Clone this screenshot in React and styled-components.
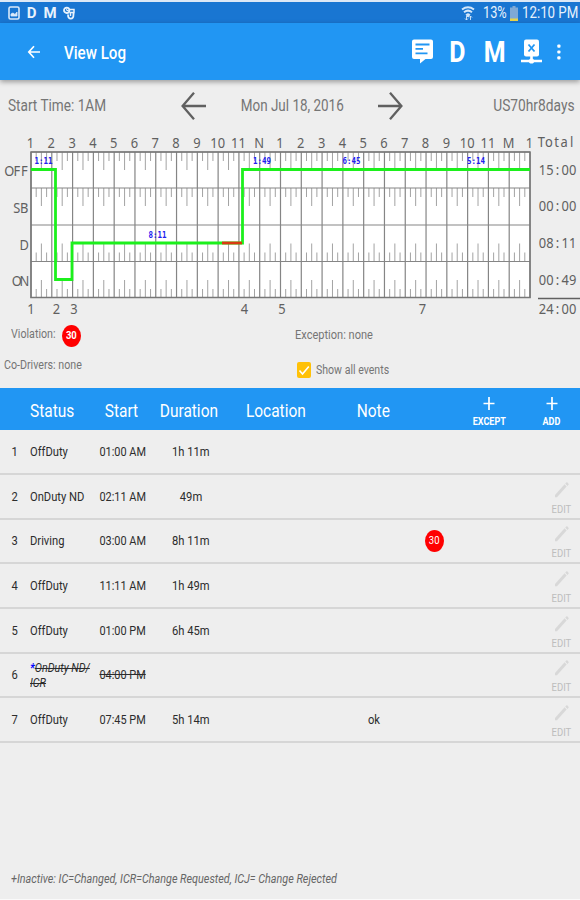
import React from "react";
import styled, { createGlobalStyle, css } from "styled-components";

const GlobalStyle = createGlobalStyle`
  body {
    margin: 0;
    background: #eeeeee;
  }
  * {
    box-sizing: border-box;
  }
`;

const HOURS = [
  "1", "2", "3", "4", "5", "6", "7", "8", "9", "10", "11", "N",
  "1", "2", "3", "4", "5", "6", "7", "8", "9", "10", "11", "M", "1"
];

const DUTY_ROWS = [
  { label: "OFF", total: "15:00", top: 22 },
  { label: "SB", total: "00:00", top: 58 },
  { label: "D", total: "08:11", top: 95, fromBottom: true },
  { label: "ON", total: "00:49", top: 131.5, fromBottom: true }
];

const MARKERS = [
  { label: "1", x: 31 },
  { label: "2", x: 56.5 },
  { label: "3", x: 74 },
  { label: "4", x: 244.5 },
  { label: "5", x: 282 },
  { label: "7", x: 422.5 }
];

const SPANS = [
  { label: "1:11", x: 43.5, y: 34 },
  { label: "8:11", x: 157.5, y: 108 },
  { label: "1:49", x: 262, y: 34 },
  { label: "6:45", x: 351.5, y: 34 },
  { label: "5:14", x: 476, y: 34 }
];

const EVENTS = [
  { status: "OffDuty", start: "01:00 AM", duration: "1h 11m", locked: true },
  { status: "OnDuty ND", start: "02:11 AM", duration: "49m" },
  { status: "Driving", start: "03:00 AM", duration: "8h 11m", flag: "30" },
  { status: "OffDuty", start: "11:11 AM", duration: "1h 49m" },
  { status: "OffDuty", start: "01:00 PM", duration: "6h 45m" },
  { status: "OnDuty ND/", suffix: "ICR", start: "04:00 PM", inactive: true },
  { status: "OffDuty", start: "07:45 PM", duration: "5h 14m", note: "ok" }
];

const LEFT = 31;
const RIGHT = 530;
const BOTTOM = 168;
const HOUR = (RIGHT - LEFT) / 24;

const Screen = styled.div`
  display: flex;
  flex-direction: column;
  width: 580px;
  height: 900px;
  overflow: hidden;
  border-top: 2px solid #dce8f6;
  border-bottom: 1px solid #fafafa;
  background: #eeeeee;
  font-family: Roboto, "Liberation Sans", sans-serif;
`;

// condensed text, squeezed from the side it is aligned to
const Text = styled.span`
  display: inline-block;
  white-space: nowrap;
  transform: scaleX(${p => p.$squeeze || 0.86});
  transform-origin: ${p => p.$from || "left"} center;
`;

const StatusBar = styled.div`
  flex: none;
  display: flex;
  align-items: center;
  height: 21px;
  padding: 1px 3px 0 8px;
  background: #1976d2;
  color: #e8f2fc;
  font-size: 16px;

  svg {
    flex: none;
    display: block;
  }
`;

const StatusLetter = styled.b`
  width: ${p => p.$width}px;
  margin-right: ${p => p.$gap || 0}px;
  font-size: 15px;
  text-align: center;
  line-height: 20px;
`;

const StatusRight = styled.div`
  display: flex;
  align-items: center;
  margin-left: auto;
`;

const Charge = styled.div`
  width: 32px;
  margin-right: 3px;
  line-height: 20px;
  text-align: right;
`;

const Clock = styled.div`
  width: 55px;
  margin-left: 4px;
  line-height: 20px;
`;

const AppBar = styled.header`
  flex: none;
  display: flex;
  align-items: center;
  height: 57px;
  padding: 0 19px 0 25px;
  background: #2196f3;
  color: #ffffff;
  box-shadow: 0 2px 5px rgba(0, 0, 0, 0.35);

  svg {
    display: block;
  }
`;

const Title = styled.h1`
  flex: 1;
  margin: 2px 0 0 21px;
  font-size: 18px;
  font-weight: 500;
`;

const Letters = styled.div`
  display: flex;
  margin: 0 8px 0 6px;
`;

const ActionLetter = styled.b`
  width: 37px;
  padding-top: 1px;
  text-align: center;
  font-size: 29px;
  line-height: 34px;
`;

const Overflow = styled.div`
  margin-left: 15px;
`;

const DateRow = styled.div`
  flex: none;
  display: grid;
  grid-template-columns: 172px 28px 168px 28px 1fr;
  align-items: center;
  height: 50px;
  padding: 1px 5px 0 8px;
  color: #757575;
  font-size: 16px;

  > :nth-child(3) {
    text-align: center;
  }
  > :last-child {
    text-align: right;
  }
  svg {
    display: block;
  }
`;

const Chart = styled.svg`
  flex: none;
  display: block;
  width: 580px;
  height: 190px;
`;

const ChartLabel = styled.text`
  fill: #606060;
  font-family: "Noto Sans", sans-serif;
  font-size: 15px;
  text-anchor: middle;
`;

const SpanLabel = styled.text`
  fill: #2020f0;
  font-family: "DejaVu Sans Mono", monospace;
  font-size: 8.5px;
  font-weight: bold;
  text-anchor: middle;
`;

const Details = styled.div`
  flex: none;
  display: grid;
  grid-template-columns: 295px 1fr;
  grid-template-rows: 31px 37px;
  height: 68px;
  color: #757575;
  font-size: 12px;
`;

const Detail = styled.div`
  display: flex;
  align-items: center;
  padding-left: ${p => p.$indent || 0}px;
  padding-bottom: ${p => p.$raise || 0}px;
`;

const ViolationName = styled.div`
  width: 51px;
  padding-bottom: 3px;
`;

const Badge = styled.div`
  display: flex;
  align-items: center;
  justify-content: center;
  width: 19px;
  height: 22px;
  border-radius: 50%;
  background: #ff0000;
  color: #ffffff;
  font-size: 11px;
  font-weight: ${p => (p.$bold ? 700 : 400)};
`;

const CheckBox = styled.div`
  display: flex;
  width: 14px;
  height: 16px;
  margin: 0 5px 0 2px;
  border-radius: 2px;
  background: #ffc107;
`;

const columns = css`
  display: grid;
  grid-template-columns: 30px 70px 55px 72px 97px 100px 20px 1fr;
  align-items: center;
`;

const TableHead = styled.div`
  ${columns}
  flex: none;
  height: 42px;
  padding-top: 2px;
  background: #2196f3;
  color: #ffffff;
  font-size: 18px;
`;

const Row = styled.div`
  ${columns}
  flex: none;
  height: ${p => (p.$first ? 45 : 44.67)}px;
  border-bottom: 2px solid #d6d6d6;
  color: #2c2c2c;
  font-size: 13px;
`;

const Cell = styled.div`
  display: flex;
  justify-content: ${p => (p.$left ? "flex-start" : "center")};
  padding-right: ${p => p.$right || 0}px;
`;

const Inactive = styled.div`
  font-size: 12.5px;
  font-style: italic;
  line-height: 15px;

  s {
    text-decoration-thickness: 1px;
  }
  b {
    color: #0000ff;
  }
`;

const Actions = styled.div`
  display: flex;
  justify-content: flex-end;
  padding-right: ${p => p.$right}px;
`;

const Action = styled.div`
  display: flex;
  flex-direction: column;
  align-items: center;
  width: ${p => p.$width}px;
  padding-top: 5px;
  font-size: 10.5px;
  font-weight: 700;
  line-height: 12px;

  svg {
    display: block;
    margin-bottom: 6px;
  }
`;

const EditAction = styled(Action)`
  color: #bdbdbd;
  font-size: 11px;
  font-weight: 400;
`;

const Footnote = styled.footer`
  margin: auto 0 12px 11px;
  color: #666666;
  font-size: 12px;
  font-style: italic;
  line-height: 15px;
`;

function PictureIcon() {
  return (
    <svg width="12" height="14" viewBox="0 0 12 14" fill="none" stroke="#d9e9fa">
      <rect x="1" y="1" width="10" height="12" rx="1.5" strokeWidth="1.6" />
      <path d="M3 10V8l2-1 2 1.5L9 6v4z" fill="#d9e9fa" strokeWidth="0.8" />
    </svg>
  );
}

function SyncIcon() {
  return (
    <svg width="12" height="14" viewBox="0 0 12 14" fill="none" stroke="#e8f2fc">
      <circle cx="3.7" cy="4.3" r="2.7" strokeWidth="1.8" />
      <path d="M3.7 2.5v2h2" />
      <path d="M7 3.5h4v3H6.5" strokeWidth="1.5" />
      <path d="M5 8.5c0 3 1 4.2 2.8 4.2s2.7-1.2 2.7-4.2V7" strokeWidth="1.8" />
      <path d="M7.5 7v3" strokeWidth="1.4" />
    </svg>
  );
}

function WifiIcon() {
  return (
    <svg width="14" height="16" viewBox="0 0 14 16" fill="none" stroke="#d3e6fa">
      <path d="M1 4.5Q7 0 13 4.5" strokeWidth="2" />
      <path d="M3 7.2Q7 4 11 7.2" strokeWidth="2" />
      <path d="M5 9.5Q7 8 9 9.5L7 12z" fill="#d3e6fa" />
      <path d="M5.5 11v4M4 13.5 5.5 15 7 13.5M9.5 15v-4M8 12.5l1.5-1.5 1.5 1.5" strokeWidth="0.9" />
    </svg>
  );
}

function BatteryIcon() {
  return (
    <svg width="8" height="15" viewBox="0 0 8 15">
      <path d="M2.5 0h3v1.5H8V15H0V1.5h2.5z" fill="#7fa9d6" />
      <path d="M0 12.5h8V15H0z" fill="#e9d44b" />
    </svg>
  );
}

function BackIcon() {
  return (
    <svg width="18" height="18" viewBox="0 0 18 18" fill="none" stroke="#fff" strokeWidth="1.7">
      <path d="M15 9H4M9 3.3 3.8 9 9 14.7" />
    </svg>
  );
}

function MessageIcon() {
  return (
    <svg width="21" height="25" viewBox="0 0 21 25">
      <path
        d="M2 .5h17a2 2 0 0 1 2 2V18a2 2 0 0 1-2 2h-5.5L8 24.5V20H2a2 2 0 0 1-2-2V2.5a2 2 0 0 1 2-2z"
        fill="#fff"
      />
      <path d="M3.5 5.5h14M3.5 9.8H11M3.5 14.3h12" stroke="#2196f3" strokeWidth="1.8" />
    </svg>
  );
}

function DeviceIcon() {
  return (
    <svg width="21" height="25" viewBox="0 0 21 25">
      <rect x="3" y=".5" width="15" height="17" rx="2" fill="#fff" />
      <path d="M7.5 5.5 13.5 12.5M13.5 5.5 7.5 12.5" stroke="#2196f3" strokeWidth="1.8" />
      <path d="M10.5 17v5M0 22h21" stroke="#fff" strokeWidth="2.6" />
      <circle cx="10.5" cy="22" r="2.6" fill="#fff" />
    </svg>
  );
}

function MoreIcon() {
  return (
    <svg width="4" height="16" viewBox="0 0 4 16" fill="#fff">
      <rect x=".3" y=".5" width="3.2" height="3.2" rx="1" />
      <rect x=".3" y="6.4" width="3.2" height="3.2" rx="1" />
      <rect x=".3" y="12.3" width="3.2" height="3.2" rx="1" />
    </svg>
  );
}

function DayArrow({ next }) {
  return (
    <svg width="28" height="28" viewBox="0 0 28 28" fill="none" stroke="#606060" strokeWidth="2.3">
      <path
        d="M26 14H2.5M14 .8 2.6 14 14 27.2"
        transform={next ? "translate(28 0) scale(-1 1)" : undefined}
      />
    </svg>
  );
}

function PlusIcon() {
  return (
    <svg width="12" height="13" viewBox="0 0 12 13" stroke="#fff" strokeWidth="1.7">
      <path d="M.5 6.5h11M6 0v13" />
    </svg>
  );
}

function PencilIcon() {
  return (
    <svg width="14" height="16" viewBox="0 0 14 16" fill="#d8d8d8">
      <path d="M0 13 9.6 2.2 11.6 4.5 2 15.3H0z" />
      <path d="M10.3 1.5 11.5.2Q12 0 12.5.5L13.5 1.7Q14 2.2 13.5 2.7L12.4 3.9z" />
    </svg>
  );
}

// places every character on a fixed pitch, like a terminal font
function MonoText({ x, y, children }) {
  const pitch = 8.8;
  const chars = children.split("");
  const xs = chars.map((c, i) => (i - (chars.length - 1) / 2) * pitch);
  return (
    <g transform={`translate(${x} ${y}) scale(0.86 1)`}>
      <ChartLabel x={xs.join(" ")}>{children}</ChartLabel>
    </g>
  );
}

function Ticks({ top, bottom, fromBottom }) {
  const lines = [];
  for (let i = 0; i < 96; i++) {
    if (i % 4 === 0) continue;
    const length = i % 2 ? 9 : 18;
    const x = LEFT + (i * HOUR) / 4;
    lines.push(fromBottom ? `M${x} ${bottom}v-${length}` : `M${x} ${top}v${length}`);
  }
  return <path d={lines.join("")} stroke="#999999" strokeWidth="0.9" />;
}

function DutyChart() {
  return (
    <Chart viewBox="0 0 580 190">
      <rect x={LEFT} y="22" width={RIGHT - LEFT} height={BOTTOM - 22} fill="#fff" />
      {DUTY_ROWS.map((row, i) => (
        <Ticks
          key={row.label}
          top={row.top}
          bottom={i < 3 ? DUTY_ROWS[i + 1].top : BOTTOM}
          fromBottom={row.fromBottom}
        />
      ))}
      {HOURS.map((hour, i) => (
        <React.Fragment key={i}>
          <path d={`M${LEFT + i * HOUR} 22V${BOTTOM}`} stroke="#858585" strokeWidth="1.2" />
          <MonoText x={LEFT - 0.5 + i * HOUR} y={17.5}>
            {hour}
          </MonoText>
        </React.Fragment>
      ))}
      {DUTY_ROWS.map((row, i) => (
        <React.Fragment key={row.label}>
          <path d={`M${LEFT} ${row.top}H${RIGHT}`} stroke="#858585" strokeWidth="1.2" />
          <MonoText x={28 - row.label.length * 3.75} y={46 + i * 36.8}>
            {row.label}
          </MonoText>
          <MonoText x={557.5} y={44.5 + i * 36.8}>
            {row.total}
          </MonoText>
        </React.Fragment>
      ))}
      <rect
        x={LEFT}
        y="22"
        width={RIGHT - LEFT}
        height={BOTTOM - 22.5}
        fill="none"
        stroke="#777777"
        strokeWidth="1.5"
      />
      <path d="M31 39.5H55.5V149.5H72V113H242.5V39.5H530" fill="none" stroke="#1cf01c" strokeWidth="2.8" />
      <path d="M222 113h20" stroke="#d83a10" strokeWidth="2.8" />
      {SPANS.map(span => (
        <g key={span.x} transform={`translate(${span.x} ${span.y}) scale(0.88 1)`}>
          <SpanLabel>{span.label}</SpanLabel>
        </g>
      ))}
      <MonoText x={556.5} y={17}>
        Total
      </MonoText>
      <path d="M538 168.5H580" stroke="#606060" strokeWidth="1.5" />
      <MonoText x={557.5} y={184}>
        24:00
      </MonoText>
      {MARKERS.map(m => (
        <MonoText key={m.label} x={m.x} y={184}>
          {m.label}
        </MonoText>
      ))}
    </Chart>
  );
}

function EventRow({ event, index }) {
  return (
    <Row $first={index === 0}>
      <Cell>
        <Text $from="center">{index + 1}</Text>
      </Cell>
      <Cell $left>
        {event.inactive ? (
          <Inactive>
            <Text>
              <b>*</b>
              <s>{event.status}</s>
              <br />
              <s>{event.suffix}</s>
            </Text>
          </Inactive>
        ) : (
          <Text>{event.status}</Text>
        )}
      </Cell>
      <Cell $right={10}>
        <Text $from="center" $squeeze={0.84}>
          {event.inactive ? <s>{event.start}</s> : event.start}
        </Text>
      </Cell>
      <Cell>
        <Text $from="center">{event.duration}</Text>
      </Cell>
      <Cell />
      <Cell>
        <Text $from="center">{event.note}</Text>
      </Cell>
      <Cell>
        {event.flag && (
          <Badge>
            <Text $from="center">{event.flag}</Text>
          </Badge>
        )}
      </Cell>
      {!event.locked && (
        <Actions $right={0}>
          <EditAction $width={37}>
            <PencilIcon />
            <Text $from="center">EDIT</Text>
          </EditAction>
        </Actions>
      )}
    </Row>
  );
}

export default function App() {
  return (
    <Screen>
      <GlobalStyle />
      <StatusBar>
        <PictureIcon />
        <StatusLetter $width={23}>D</StatusLetter>
        <StatusLetter $width={14} $gap={6}>
          M
        </StatusLetter>
        <SyncIcon />
        <StatusRight>
          <WifiIcon />
          <Charge>
            <Text $from="right" $squeeze={0.8}>
              13%
            </Text>
          </Charge>
          <BatteryIcon />
          <Clock>
            <Text $squeeze={0.83}>12:10 PM</Text>
          </Clock>
        </StatusRight>
      </StatusBar>
      <AppBar>
        <BackIcon />
        <Title>
          <Text $squeeze={0.84}>View Log</Text>
        </Title>
        <MessageIcon />
        <Letters>
          <ActionLetter>
            <Text $from="center">D</Text>
          </ActionLetter>
          <ActionLetter>
            <Text $from="center">M</Text>
          </ActionLetter>
        </Letters>
        <DeviceIcon />
        <Overflow>
          <MoreIcon />
        </Overflow>
      </AppBar>
      <DateRow>
        <div>
          <Text $squeeze={0.85}>Start Time: 1AM</Text>
        </div>
        <DayArrow />
        <div>
          <Text $from="center" $squeeze={0.84}>
            Mon Jul 18, 2016
          </Text>
        </div>
        <DayArrow next />
        <div>
          <Text $from="right">US70hr8days</Text>
        </div>
      </DateRow>
      <DutyChart />
      <Details>
        <Detail $indent={11}>
          <ViolationName>
            <Text $squeeze={0.89}>Violation:</Text>
          </ViolationName>
          <Badge $bold>
            <Text $from="center">30</Text>
          </Badge>
        </Detail>
        <Detail $raise={2}>
          <Text $squeeze={0.92}>Exception: none</Text>
        </Detail>
        <Detail $indent={4} $raise={9}>
          <Text $squeeze={0.89}>Co-Drivers: none</Text>
        </Detail>
        <Detail>
          <CheckBox>
            <svg width="14" height="16" viewBox="0 0 14 16" fill="none" stroke="#fff" strokeWidth="1.6">
              <path d="M2.5 8.5 5.5 12 11.8 4.5" />
            </svg>
          </CheckBox>
          <Text $squeeze={0.88}>Show all events</Text>
        </Detail>
      </Details>
      <TableHead>
        <Cell />
        <Cell $left>
          <Text>Status</Text>
        </Cell>
        <Cell $right={12}>
          <Text $from="center">Start</Text>
        </Cell>
        <Cell $right={4}>
          <Text $from="center">Duration</Text>
        </Cell>
        <Cell>
          <Text $from="center">Location</Text>
        </Cell>
        <Cell $right={2}>
          <Text $from="center">Note</Text>
        </Cell>
        <Cell />
        <Actions $right={5}>
          <Action $width={78}>
            <PlusIcon />
            <Text $from="center">EXCEPT</Text>
          </Action>
          <Action $width={47}>
            <PlusIcon />
            <Text $from="center">ADD</Text>
          </Action>
        </Actions>
      </TableHead>
      {EVENTS.map((event, i) => (
        <EventRow key={event.start} event={event} index={i} />
      ))}
      <Footnote>
        <Text $squeeze={0.9}>+Inactive: IC=Changed, ICR=Change Requested, ICJ= Change Rejected</Text>
      </Footnote>
    </Screen>
  );
}
